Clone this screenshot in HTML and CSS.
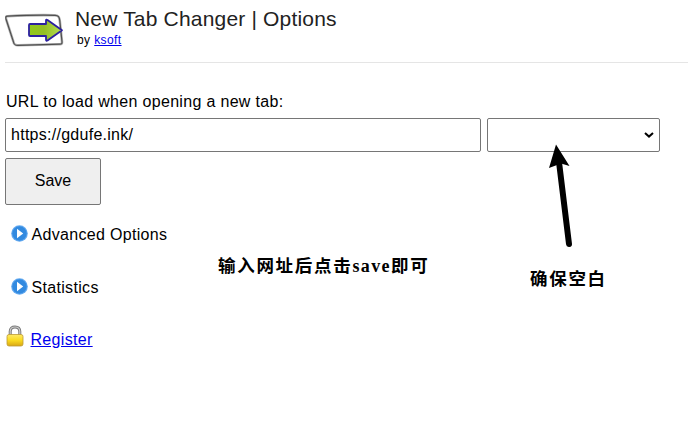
FILE: index.html
```html
<!DOCTYPE html>
<html lang="en">
<head>
<meta charset="utf-8">
<title>New Tab Changer | Options</title>
<link rel="stylesheet" href="styles.css">
</head>
<body>
<header class="header">
  <svg class="logo" width="60" height="36" viewBox="0 0 60 36" fill="none">
    <defs><linearGradient id="green" x1="0" y1="0" x2="1" y2="0"><stop offset="0" stop-color="#91c91b"/><stop offset=".45" stop-color="#94bf23"/><stop offset="1" stop-color="#b5df52"/></linearGradient></defs>
    <path d="M2.500 4.200C18 3.400 38 3 50 3.300c3.500.2 4.400 1.500 4.800 5.500l2.200 21c.1 1.800-.3 2.400-2 2.400L13 33.300c-3 .1-4-.6-4.700-4L1 7C.5 5 .8 4.300 2.500 4.200Z" stroke="#b5b5b5" stroke-width="2.600"/>
    <path d="M2.500 4.200C18 3.400 38 3 50 3.300c3.500.2 4.400 1.500 4.800 5.500l2.200 21c.1 1.800-.3 2.400-2 2.400L13 33.300c-3 .1-4-.6-4.700-4L1 7C.5 5 .8 4.300 2.500 4.200Z" stroke="#505050" stroke-width="1.200"/>
    <path d="M25 12h16V8.500q0-1.500 1.500-.5L57 18.300 42.500 28.500q-1.500.8-1.500-.8V24H25q-1 0-1-1V13q0-1 1-1Z" fill="url(#green)" stroke="#2c20a0" stroke-width="1.800" stroke-linejoin="round"/>
  </svg>
  <div class="heading">
    <h1 class="title">New Tab Changer | Options</h1>
    <p class="byline">by <a href="#">ksoft</a></p>
  </div>
</header>
<main class="main">
  <label class="label" for="url">URL to load when opening a new tab:</label>
  <div class="row">
    <input class="url" id="url" type="text" value="https://gdufe.ink/">
    <div class="picker">
      <select class="select" aria-label="Preset"><option></option></select>
      <svg class="chevron" width="10" height="6" viewBox="0 0 10 6"><path d="M1 1l4 3.600L9 1" fill="none" stroke="#000" stroke-width="2"/></svg>
    </div>
  </div>
  <button class="save" type="button">Save</button>
  <div class="item advanced">
    <svg class="play" width="17" height="17" viewBox="0 0 17 17"><circle cx="8.500" cy="8.500" r="8.300" fill="#64aaf0"/><circle cx="8.500" cy="8.500" r="7.200" fill="#328ae0"/><path d="M6 3.800v9.400l6.200-4.700Z" fill="#fff"/></svg>
    <span class="text">Advanced Options</span>
  </div>
  <div class="item statistics">
    <svg class="play" width="17" height="17" viewBox="0 0 17 17"><circle cx="8.500" cy="8.500" r="8.300" fill="#64aaf0"/><circle cx="8.500" cy="8.500" r="7.200" fill="#328ae0"/><path d="M6 3.800v9.400l6.200-4.700Z" fill="#fff"/></svg>
    <span class="text">Statistics</span>
  </div>
  <div class="item register">
    <svg class="lock" width="18" height="22" viewBox="0 0 18 22">
      <defs><linearGradient id="gold" x1="0" y1="0" x2="0" y2="1"><stop offset="0" stop-color="#ffe968"/><stop offset=".5" stop-color="#fadb20"/><stop offset="1" stop-color="#d9a714"/></linearGradient></defs>
      <path d="M4.200 11V6.500C4.200 3.200 6 2 9 2s4.800 1.200 4.800 4.500V11" fill="none" stroke="#777" stroke-width="3"/>
      <path d="M4.200 11V6.500C4.200 3.200 6 2 9 2s4.800 1.200 4.800 4.500V11" fill="none" stroke="#ccc" stroke-width="1.200"/>
      <rect x="1" y="9.500" width="16" height="11.500" rx="2" fill="url(#gold)" stroke="#bd9a32" stroke-width=".8"/>
    </svg>
    <a class="text" href="#">Register</a>
  </div>
</main>
<div class="note note-save">输入网址后点击<span class="latin">save</span>即可</div>
<div class="note note-blank">确保空白</div>
<svg class="arrow" width="24" height="106" viewBox="0 0 24 106"><path d="M10 18L20 100" stroke="#000" stroke-width="6" stroke-linecap="round"/><path d="M7 0.500L20.500 22 12 19.500 0 24Z"/></svg>
</body>
</html>
```
FILE: styles.css
```css
* { box-sizing: border-box; }
body {
  margin: 0;
  padding: 0 0 0 5px;
  height: 422px;
  position: relative;
  overflow: hidden;
  background: #fff;
  color: #000;
  font: 16px/20px "Liberation Sans", Arial, sans-serif;
}
a { color: #0000ee; }
.header {
  display: flex;
  height: 63px;
  border-bottom: 1px solid #e5e5e5;
}
.logo { margin-top: 12px; flex: none; }
.heading { padding: 7px 0 0 10px; }
.title {
  margin: 0;
  font-size: 21px;
  line-height: 24px;
  font-weight: 400;
  letter-spacing: 0.18px;
  color: #222;
}
.byline { margin: 1px 0 0 2px; font-size: 12px; line-height: 16px; letter-spacing: 0.4px; }
.main { display: flex; flex-direction: column; align-items: flex-start; padding-top: 29px; }
.label { margin-left: 1px; letter-spacing: 0.32px; }
.row { display: flex; gap: 6px; margin-top: 6px; }
.url, .select {
  height: 34px;
  margin: 0;
  border: 1px solid #767676;
  border-radius: 2px;
  background: #fff;
  color: #000;
  font: inherit;
}
.url { width: 476px; padding: 0 5px; letter-spacing: 0.27px; }
.picker { position: relative; }
.select { width: 173px; appearance: none; display: block; }
.chevron { position: absolute; right: 6px; top: 14px; }
.save {
  width: 96px;
  height: 47px;
  margin: 6px 0 0;
  padding: 0 0 2px;
  border: 1px solid #767676;
  border-radius: 2px;
  background: #efefef;
  color: #000;
  font: inherit;
}
.item { display: flex; align-items: center; height: 22px; }
.text { padding-top: 2px; letter-spacing: 0.32px; }
.play { margin: -2px 3.500px 0 6px; }
.advanced { margin-top: 18px; }
.statistics { margin-top: 31px; }
.register { margin-top: 30px; }
.lock { margin: -7px 6.500px 0 1px; }
.note {
  position: absolute;
  font: 700 17.500px/24px "Liberation Serif", "Noto Sans CJK SC", serif;
  letter-spacing: 1.700px;
  white-space: nowrap;
}
.note-save { left: 218px; top: 254px; }
.note-blank { left: 530px; top: 267px; }
.latin { font-size: 18px; letter-spacing: 1.400px; }
.arrow { position: absolute; left: 549px; top: 144px; }
```
